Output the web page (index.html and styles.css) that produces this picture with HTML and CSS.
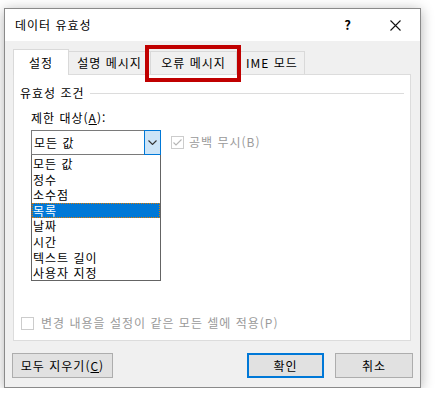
FILE: index.html
```html
<!DOCTYPE html>
<html lang="ko">
<head>
    <meta charset="UTF-8">
    <title>데이터 유효성</title>
    <link rel="stylesheet" href="styles.css">
</head>
<body>
    <div class="dialog">
        <div class="titlebar">
            <span class="title">데이터 유효성</span>
            <span class="help">?</span>
            <svg class="close" width="11" height="11" viewBox="0 0 11 11">
                <path d="M0.5 0.5L10.5 10.5M10.5 0.5L0.5 10.5" stroke="#111" stroke-width="1.1" fill="none"/>
            </svg>
        </div>
        <div class="body">
            <div class="tabs">
                <div class="tab active">설정</div>
                <div class="tab t2">설명 메시지</div>
                <div class="tab t3">오류 메시지</div>
                <div class="tab t4">IME 모드</div>
                <div class="mark"></div>
            </div>
            <div class="panel">
                <div class="group">
                    <span>유효성 조건</span>
                    <div class="rule"></div>
                </div>
                <div class="field">
                    <div class="label">제한 대상(<u>A</u>):</div>
                    <div class="combo-row">
                        <div class="combo-wrap">
                            <div class="combo">
                                <span class="value">모든 값</span>
                                <span class="drop">
                                    <svg width="9" height="5" viewBox="0 0 9 5">
                                        <path d="M0.5 0.5L4.5 4.5L8.5 0.5" stroke="#333" stroke-width="1.1" fill="none"/>
                                    </svg>
                                </span>
                            </div>
                            <ul class="list">
                                <li>모든 값</li>
                                <li>정수</li>
                                <li>소수점</li>
                                <li class="sel">목록</li>
                                <li>날짜</li>
                                <li>시간</li>
                                <li>텍스트 길이</li>
                                <li>사용자 지정</li>
                            </ul>
                        </div>
                        <label class="check off">
                            <span class="box">
                                <svg width="11" height="11" viewBox="0 0 11 11">
                                    <path d="M1.5 5.5L4 8L9.5 2.5" stroke="#b5b5b5" stroke-width="1.1" fill="none"/>
                                </svg>
                            </span>
                            공백 무시(B)
                        </label>
                    </div>
                </div>
                <label class="check off apply">
                    <span class="box"></span>
                    변경 내용을 설정이 같은 모든 셀에 적용(P)
                </label>
            </div>
        </div>
        <div class="footer">
            <button class="btn clear">모두 지우기(<u>C</u>)</button>
            <button class="btn ok">확인</button>
            <button class="btn">취소</button>
        </div>
    </div>
</body>
</html>
```

FILE: styles.css
```css
*{
    margin: 0;
    padding: 0;
    box-sizing: border-box;
}
body{
    background-color: #fff;
    font-family: "Noto Sans CJK KR", "Noto Sans", sans-serif;
    font-size: 12px;
    letter-spacing: 1px;
    color: #000;
}
.dialog{
    position: relative;
    margin: 8px 0 0 4px;
    width: 417px;
    height: 380px;
    border: 1px solid #8a8a8a;
    background-color: #f0f0f0;
    box-shadow: 0 2px 12px rgba(0, 0, 0, 0.3);
}
.titlebar{
    height: 32px;
    background-color: #fff;
    display: flex;
    align-items: center;
    padding-left: 10px;
}
.title{
    flex: 1;
    line-height: 16px;
}
.help{
    font-size: 13px;
    font-weight: bold;
    line-height: 16px;
    margin-right: 38px;
}
.close{
    margin-right: 19px;
}
.body{
    padding: 8px 8px 0 8px;
}
.tabs{
    position: relative;
    display: flex;
    align-items: flex-end;
    height: 25px;
}
.tab{
    height: 23px;
    line-height: 22px;
    text-align: center;
    border: 1px solid #d9d9d9;
    border-bottom: none;
    border-left: none;
    background-color: #f0f0f0;
    color: #000;
}
.tab.active{
    width: 56px;
    height: 26px;
    line-height: 25px;
    background-color: #fff;
    border-left: 1px solid #d9d9d9;
    position: relative;
    z-index: 1;
    margin-bottom: -1px;
}
.t2{
    width: 82px;
}
.t3{
    width: 86px;
}
.t4{
    width: 68px;
    text-align: left;
    padding-left: 9px;
}
.mark{
    position: absolute;
    left: 132px;
    top: -4px;
    width: 96px;
    height: 37px;
    border: 4px solid #c00000;
    z-index: 2;
}
.panel{
    width: 398px;
    height: 267px;
    background-color: #fff;
    border: 1px solid #dcdcdc;
    padding: 10px 6px 0 6px;
}
.group{
    display: flex;
    align-items: center;
    line-height: 16px;
}
.rule{
    flex: 1;
    height: 1px;
    background-color: #dcdcdc;
    margin-left: 5px;
}
.field{
    margin-left: 11px;
}
.label{
    margin-top: 9px;
    line-height: 16px;
}
.combo-row{
    display: flex;
    gap: 10px;
    margin-top: 4px;
}
.combo-wrap{
    width: 130px;
}
.combo{
    height: 25px;
    border: 1px solid #7a7a7a;
    display: flex;
    align-items: stretch;
}
.value{
    flex: 1;
    padding-left: 2px;
    line-height: 23px;
}
.drop{
    width: 17px;
    margin: -1px -1px -1px 0;
    border: 1px solid #0078d7;
    background-color: #cce4f7;
    display: flex;
    align-items: center;
    justify-content: center;
}
.list{
    list-style: none;
    border: 1px solid #646464;
    border-top: none;
    height: 126px;
    padding-top: 1px;
}
.list li{
    height: 15.6px;
    line-height: 15.6px;
    padding-left: 1px;
}
.list .sel{
    background-color: #0078d7;
    color: #fff;
    outline: 1px dotted #e07a00;
    outline-offset: -1px;
}
.check{
    display: flex;
    align-items: center;
    gap: 5px;
    height: 16px;
    line-height: 16px;
}
.check.off{
    color: #9a9a9a;
}
.combo-row .check{
    margin-top: 4px;
}
.box{
    width: 13px;
    height: 13px;
    border: 1px solid #cccccc;
    background-color: #fff;
    display: flex;
    align-items: center;
    justify-content: center;
}
.apply{
    margin-top: 34px;
    margin-left: 1px;
    gap: 7px;
}
.footer{
    display: flex;
    gap: 11px;
    padding: 12px 7px 0 7px;
}
.btn{
    height: 25px;
    width: 78px;
    font-family: inherit;
    font-size: 12px;
    letter-spacing: 1px;
    color: #000;
    background-color: #e1e1e1;
    border: 1px solid #adadad;
}
.clear{
    width: 101px;
    margin-right: auto;
}
.ok{
    width: 77px;
    border: 2px solid #0078d7;
}
```
